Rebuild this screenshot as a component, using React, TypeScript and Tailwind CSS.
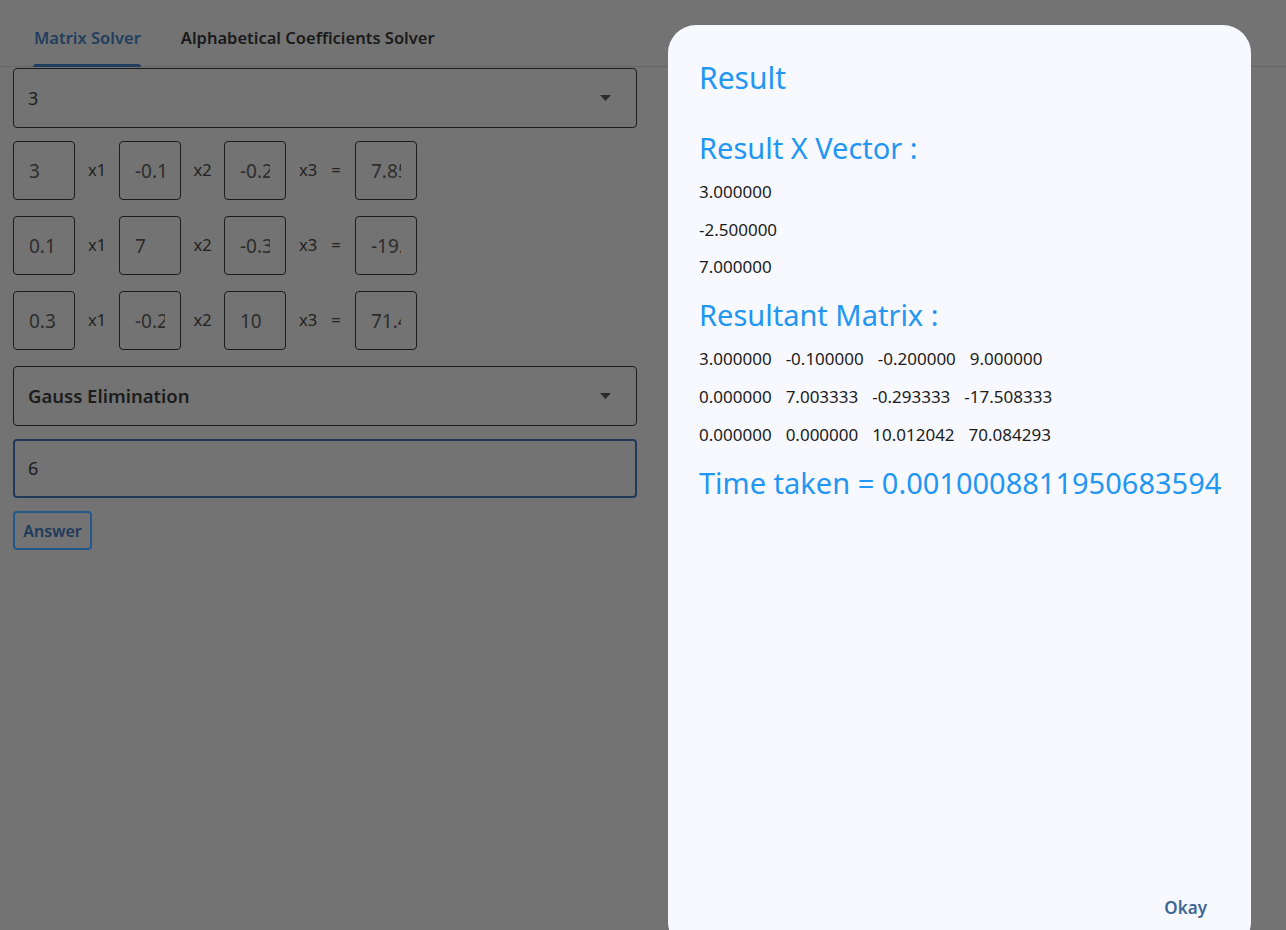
import React from "react";

const rows = [
  ["3", "-0.1", "-0.2", "7.85"],
  ["0.1", "7", "-0.3", "-19.3"],
  ["0.3", "-0.2", "10", "71.4"],
];

const xVector = ["3.000000", "-2.500000", "7.000000"];

const matrix = [
  ["3.000000", "-0.100000", "-0.200000", "9.000000"],
  ["0.000000", "7.003333", "-0.293333", "-17.508333"],
  ["0.000000", "0.000000", "10.012042", "70.084293"],
];

function Caret() {
  return (
    <svg width="11" height="6" viewBox="0 0 11 6" className="shrink-0">
      <path d="M0 0 L11 0 L5.5 6 Z" fill="#2b2b2b" />
    </svg>
  );
}

function Cell({ value }: { value: string }) {
  return (
    <input
      readOnly
      value={value}
      className="h-[59px] w-[62px] shrink-0 rounded-[4px] border border-[#1c1c1c] bg-transparent px-[15px] text-[19px] text-[#2d2d2d] outline-none"
    />
  );
}

export default function App() {
  return (
    <div className="relative h-[930px] w-full overflow-hidden bg-[#737373] font-['Noto_Sans',sans-serif]">
      {/* tabs */}
      <div className="flex h-[67px] items-stretch gap-[40px] border-b border-[#666666] pl-[34px]">
        <div className="relative flex items-center pt-[10px]">
          <span className="text-[16.5px] font-semibold text-[#223e5e]">Matrix Solver</span>
          <div className="absolute -left-px right-0 -bottom-px h-[3px] rounded-t-[3px] bg-[#223e5e]" />
        </div>
        <div className="flex items-center pt-[10px]">
          <span className="text-[16.5px] font-semibold text-[#1a1a1a]">Alphabetical Coefficients Solver</span>
        </div>
      </div>

      {/* form */}
      <div className="flex w-[650px] flex-col px-[13px] pt-px">
        <div className="flex h-[60px] items-center justify-between rounded-[4px] border border-[#1c1c1c] pl-[14px] pr-[25px]">
          <span className="text-[18px] text-[#1c1c1c]">3</span>
          <Caret />
        </div>

        <div className="mt-[13px] flex flex-col gap-[16px]">
          {rows.map((r, i) => (
            <div key={i} className="flex h-[59px] items-center text-[16.5px] text-[#222222]">
              <Cell value={r[0]} />
              <span className="w-[44px] text-center">x1</span>
              <Cell value={r[1]} />
              <span className="w-[43px] text-center">x2</span>
              <Cell value={r[2]} />
              <span className="flex w-[69px] items-center pl-[13px]">
                <span>x3</span>
                <span className="ml-[14px]">=</span>
              </span>
              <Cell value={r[3]} />
            </div>
          ))}
        </div>

        <div className="mt-[16px] flex h-[60px] items-center justify-between rounded-[4px] border border-[#1c1c1c] pl-[14px] pr-[25px]">
          <span className="text-[18.5px] font-semibold text-[#1c1c1c]">Gauss Elimination</span>
          <Caret />
        </div>

        <div className="mt-[13px] flex h-[59px] items-center rounded-[4px] border-2 border-[#203a58] px-[13px]">
          <span className="text-[18px] text-[#1c1c1c]">6</span>
        </div>

        <div className="mt-[13px]">
          <button className="h-[39px] w-[79px] rounded-[4px] border-2 border-[#22588c] text-[16px] font-semibold text-[#1f3b5c]">
            Answer
          </button>
        </div>
      </div>

      {/* result dialog */}
      <div className="absolute left-[668px] top-[25px] flex h-[925px] w-[583px] flex-col rounded-[28px] bg-[#f8f9fe] pl-[31px] pr-[30px] pt-[33px] pb-[30px]">
        <div className="text-[30px] leading-[40px] text-[#2196f3]">Result</div>
        <div className="mt-[32px] text-[29px] leading-[36px] text-[#2196f3]">Result X Vector :</div>
        <div className="mt-[7px] flex flex-col text-[17px] leading-[37.5px] text-[#1c1c1c]">
          {xVector.map((v) => (
            <div key={v}>{v}</div>
          ))}
        </div>
        <div className="mt-[11px] text-[29px] leading-[36px] text-[#2196f3]">Resultant Matrix :</div>
        <div className="mt-[7px] flex flex-col text-[17px] leading-[38px] text-[#1c1c1c]">
          {matrix.map((row, i) => (
            <div key={i} className="flex gap-[14px]">
              {row.map((c, j) => (
                <span key={j}>{c}</span>
              ))}
            </div>
          ))}
        </div>
        <div className="mt-[11px] whitespace-nowrap text-[29px] leading-[36px] text-[#2196f3]">
          Time taken = 0.0010008811950683594
        </div>
        <div className="mt-auto flex justify-end pr-[14px]">
          <span className="text-[17px] font-semibold leading-[24px] text-[#3d6796]">Okay</span>
        </div>
      </div>
    </div>
  );
}
